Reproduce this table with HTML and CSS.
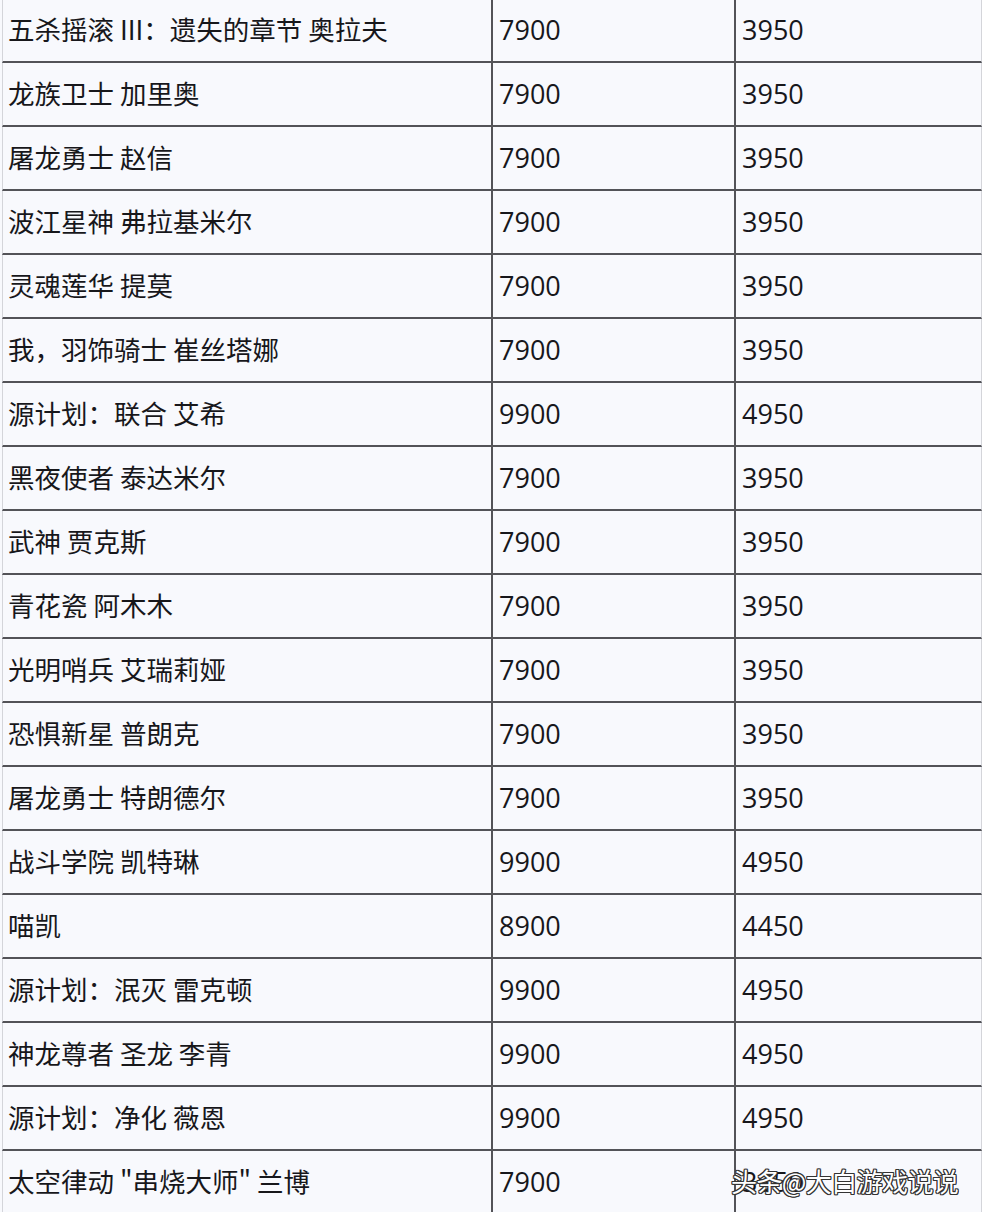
FILE: index.html
```html
<!DOCTYPE html>
<html lang="zh">
<head>
<meta charset="utf-8">
<title>皮肤价格</title>
<link rel="stylesheet" href="styles.css">
</head>
<body>
<div class="wrap">
<table class="price">
<colgroup><col class="c1"><col class="c2"><col class="c3"></colgroup>
<tbody>
<tr><td>五杀摇滚 III：遗失的章节 奥拉夫</td><td>7900</td><td>3950</td></tr>
<tr><td>龙族卫士 加里奥</td><td>7900</td><td>3950</td></tr>
<tr><td>屠龙勇士 赵信</td><td>7900</td><td>3950</td></tr>
<tr><td>波江星神 弗拉基米尔</td><td>7900</td><td>3950</td></tr>
<tr><td>灵魂莲华 提莫</td><td>7900</td><td>3950</td></tr>
<tr><td>我，羽饰骑士 崔丝塔娜</td><td>7900</td><td>3950</td></tr>
<tr><td>源计划：联合 艾希</td><td>9900</td><td>4950</td></tr>
<tr><td>黑夜使者 泰达米尔</td><td>7900</td><td>3950</td></tr>
<tr><td>武神 贾克斯</td><td>7900</td><td>3950</td></tr>
<tr><td>青花瓷 阿木木</td><td>7900</td><td>3950</td></tr>
<tr><td>光明哨兵 艾瑞莉娅</td><td>7900</td><td>3950</td></tr>
<tr><td>恐惧新星 普朗克</td><td>7900</td><td>3950</td></tr>
<tr><td>屠龙勇士 特朗德尔</td><td>7900</td><td>3950</td></tr>
<tr><td>战斗学院 凯特琳</td><td>9900</td><td>4950</td></tr>
<tr><td>喵凯</td><td>8900</td><td>4450</td></tr>
<tr><td>源计划：泯灭 雷克顿</td><td>9900</td><td>4950</td></tr>
<tr><td>神龙尊者 圣龙 李青</td><td>9900</td><td>4950</td></tr>
<tr><td>源计划：净化 薇恩</td><td>9900</td><td>4950</td></tr>
<tr><td>太空律动 "串烧大师" 兰博</td><td>7900</td><td>3950</td></tr>
</tbody>
</table>
<div class="watermark">头条@大白游戏说说</div>
</div>
</body>
</html>
```
FILE: styles.css
```css
html, body {
  margin: 0;
  padding: 0;
  background: #f8f9fd;
  overflow: hidden;
}
.wrap {
  position: relative;
  width: 982px;
  height: 1212px;
  overflow: hidden;
}
.price {
  margin: -1px 0 0 2px;
  width: 980px;
  table-layout: fixed;
  border-collapse: separate;
  border-spacing: 0;
  font-family: "Noto Sans CJK SC", "Noto Sans", sans-serif;
  font-size: 26.5px;
  color: #17171b;
}
.c1 { width: 489px; }
.c2 { width: 243px; }
.c3 { width: 248px; }
.price td {
  box-sizing: border-box;
  height: 64px;
  padding: 0 0 2px 5px;
  border-bottom: 2px solid #535358;
  vertical-align: middle;
  white-space: nowrap;
  line-height: 1;
}
.price td:first-child {
  border-left: 1px solid #d4d5da;
}
.price td + td {
  border-left: 2px solid #535358;
  padding-left: 6px;
  font-family: "Open Sans", "Noto Sans", sans-serif;
  font-size: 27px;
}
.price td:last-child {
  border-right: 1px solid #d4d5da;
}
.watermark {
  position: absolute;
  left: 731px;
  top: 1162px;
  font-family: "Noto Sans CJK SC", sans-serif;
  font-size: 26px;
  color: #ffffff;
  letter-spacing: -0.6px;
  text-shadow:
    1px 0 0 #333, -1px 0 0 #333, 0 1px 0 #333, 0 -1px 0 #333,
    1px 1px 0 #333, -1px -1px 0 #333, 1px -1px 0 #333, -1px 1px 0 #333;
}
```
